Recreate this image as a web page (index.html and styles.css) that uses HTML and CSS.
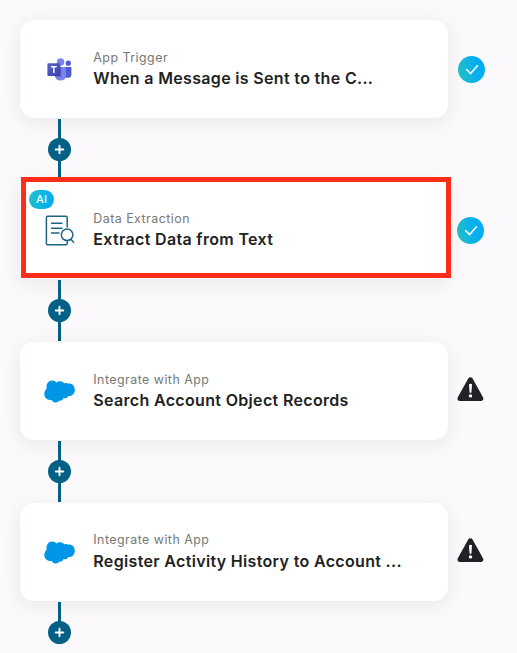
FILE: index.html
```html
<!DOCTYPE html>
<html lang="en">
<head>
  <meta charset="UTF-8">
  <title>Workflow</title>
  <meta name="viewport" content="width=device-width, initial-scale=1.0">
  <link rel="stylesheet" href="styles.css">
</head>
<body>

<!-- shared icons -->
<svg class="defs" width="0" height="0">
  <defs>
    <linearGradient id="checkFill" x1="0" y1="0.6" x2="1" y2="0.4">
      <stop offset="0.05" stop-color="#20bfca"/>
      <stop offset="0.7" stop-color="#05aef0"/>
    </linearGradient>
    <linearGradient id="tileFill" x1="0" y1="0" x2="1" y2="1">
      <stop offset="0" stop-color="#5a62c3"/>
      <stop offset="1" stop-color="#3940ab"/>
    </linearGradient>
    <symbol id="check" viewBox="0 0 27 27">
      <circle cx="13.5" cy="13.5" r="13.5" fill="url(#checkFill)"/>
      <path d="M8.3 13.2l4.300 4.300 7.200-8.200" fill="none" stroke="#fff" stroke-width="1.600"/>
    </symbol>
    <symbol id="plus" viewBox="0 0 23 23">
      <circle cx="11.5" cy="11.5" r="11.5" fill="#046084"/>
      <path d="M11.5 7.7v7.6M7.7 11.5h7.6" stroke="#fff" stroke-width="1.9" stroke-linecap="round"/>
    </symbol>
    <symbol id="warning" viewBox="0 0 27 25">
      <path d="M13.4 2.8L23.800 21.500H3z" fill="#232126" stroke="#232126" stroke-width="5" stroke-linejoin="round"/>
      <path d="M12 7.300q1.500-1 3 0l-.6 8.400h-1.800z" fill="#fff"/>
      <circle cx="13.500" cy="18.900" r="1.700" fill="#fff"/>
    </symbol>
    <symbol id="cloud" viewBox="0 0 32 24">
      <path fill="#0096e8" d="M2.700 9.500C1.800 5.500 4 1.600 7.800 1.400c2-.1 3.700.7 4.900 2.100 2-2 5.700-1.900 7.600 1 1.500-.6 2.900-.5 4.200.2 3.400-.8 6.300 2.300 6.300 6s-2.800 6.800-6.300 6.200c-.8 1.700-2.700 2.700-5.200 2.300-.7 2-2.200 2.900-3.700 2.400-1.200 2.200-6 2.900-7.900-.7-3 .4-7.300-1.200-7.400-5.700 0-2.200.9-4.200 2.400-5.700z"/>
    </symbol>
  </defs>
</svg>

<main class="flow">

  <div class="step">
    <div class="card">
      <svg class="icon" viewBox="0 -1 32 32">
        <circle cx="24.300" cy="9.200" r="2.600" fill="#4f5bd2"/>
        <path d="M20 12.900h7.400v7.600q0 3.200-3.200 3.200H20z" fill="#4f5bd2"/>
        <circle cx="16.600" cy="8" r="3.700" fill="#7b83eb"/>
        <path d="M11 12.900h11v8.200q0 5.500-5.500 5.500T11 21.100z" fill="#7b83eb"/>
        <path d="M11 12.900h6.200v9.800H11z" fill="#525bc4"/>
        <rect x="3.400" y="9.200" width="12.800" height="12.800" rx="1.200" fill="url(#tileFill)"/>
        <path d="M6.900 12.700h5.800M9.800 12.700v6.400" stroke="#fff" stroke-width="1.500"/>
      </svg>
      <div class="text">
        <div class="label">App Trigger</div>
        <div class="title">When a Message is Sent to the C...</div>
      </div>
    </div>
    <svg class="status"><use href="#check"/></svg>
  </div>
  <div class="connector"><svg class="add"><use href="#plus"/></svg></div>

  <div class="step">
    <div class="card selected">
      <span class="badge">AI</span>
      <svg class="icon" viewBox="0 0 32 32" fill="none" stroke="#1c6585" stroke-width="1.5">
        <path d="M23.200 13.500V3.500q0-1.300-1.300-1.300H3.700q-1.300 0-1.300 1.300v26q0 1.300 1.300 1.300h18.200q1.300 0 1.300-1.300v-2.500"/>
        <path d="M7 9.200h11.500M7 14.200h11.500M7 18.900h8.500"/>
        <circle cx="23.100" cy="20.800" r="5.800"/>
        <path d="M26.800 25.200l3.200 3.600"/>
      </svg>
      <div class="text">
        <div class="label">Data Extraction</div>
        <div class="title">Extract Data from Text</div>
      </div>
    </div>
    <svg class="status near"><use href="#check"/></svg>
  </div>
  <div class="connector"><svg class="add"><use href="#plus"/></svg></div>

  <div class="step">
    <div class="card">
      <svg class="icon cloud"><use href="#cloud"/></svg>
      <div class="text">
        <div class="label">Integrate with App</div>
        <div class="title">Search Account Object Records</div>
      </div>
    </div>
    <svg class="status warn"><use href="#warning"/></svg>
  </div>
  <div class="connector"><svg class="add"><use href="#plus"/></svg></div>

  <div class="step">
    <div class="card">
      <svg class="icon cloud"><use href="#cloud"/></svg>
      <div class="text tight">
        <div class="label">Integrate with App</div>
        <div class="title">Register Activity History to Account ...</div>
      </div>
    </div>
    <svg class="status warn"><use href="#warning"/></svg>
  </div>
  <div class="connector last"><svg class="add"><use href="#plus"/></svg></div>

</main>

</body>
</html>
```

FILE: styles.css
```css
body {
  margin: 0;
  background: #fbf9fc;
  font-family: Inter, "Liberation Sans", sans-serif;
}
.defs { display: block; }
.flow { padding: 20px 0 0 20px; }
.step {
  display: flex;
  align-items: center;
}
.card {
  position: relative;
  display: flex;
  align-items: center;
  gap: 17.3px;
  width: 428px;
  height: 98px;
  padding-left: 24px;
  box-sizing: border-box;
  background: white;
  border-radius: 14px;
  box-shadow: 0 4px 20px rgba(30,20,30,0.08);
}
.selected { border-radius: 0; }
.selected::after {
  content: "";
  position: absolute;
  top: -4px;
  left: 1px;
  width: 430px;
  height: 101px;
  box-sizing: border-box;
  border: 5px solid #fd2d1a;
}
.badge {
  position: absolute;
  top: 9px;
  left: 9px;
  width: 25px;
  height: 19px;
  border-radius: 10px;
  background: linear-gradient(100deg, #20bfca 10%, #05aef0 80%);
  color: white;
  font-size: 11px;
  font-weight: 500;
  line-height: 19px;
  text-align: center;
}
.icon {
  width: 32px;
  height: 32px;
}
.cloud { height: 24px; }
.text {
  padding-bottom: 1px;
  white-space: nowrap;
}
.label {
  color: #777;
  font-size: 12.4px;
  line-height: 20px;
  letter-spacing: 0.48px;
}
.title {
  color: #222;
  font-size: 16px;
  font-weight: 600;
  line-height: 21px;
  letter-spacing: 0.33px;
}
.tight { padding-bottom: 2px; }
.tight .title { line-height: 22px; }
.status {
  width: 27px;
  height: 27px;
  margin-left: 10px;
}
.near { margin-left: 9px; }
.warn {
  height: 25px;
  margin: -4px 0 0 9px;
}
.connector {
  display: flex;
  align-items: center;
  justify-content: center;
  width: 23px;
  height: 61px;
  margin: 1px 0 1px 28px;
  background: linear-gradient(#046084, #046084) center / 3px 100% no-repeat;
  position: relative;
}
.add {
  width: 23px;
  height: 23px;
}
.last {
  align-items: flex-end;
  height: 42px;
  margin-bottom: 0;
  background-size: 3px 30px;
  background-position: top;
}
```
